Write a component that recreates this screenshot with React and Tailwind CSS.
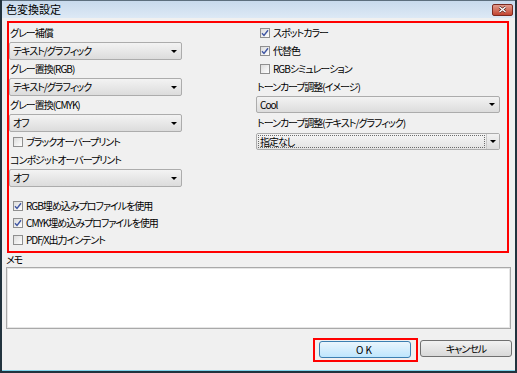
import React from "react";

// 色変換設定 dialog (Windows 7 style)

function Arrow() {
  return (
    <span className="block h-0 w-0 border-x-[3px] border-t-[3px] border-x-transparent border-t-black" />
  );
}

function Select({ value, focus }) {
  if (focus) {
    return (
      <div className="flex h-[17px] w-full rounded-[2px] border border-[#acacac] bg-linear-to-b from-[#f5f5f5] to-[#e3e3e3]">
        <div className="m-[1px] flex flex-1 items-center border border-dotted border-[#6b6b6b] pl-[1px] leading-none">
          {value}
        </div>
        <div className="flex w-[13px] items-center justify-center border-l border-[#c9c9c9] bg-linear-to-b from-[#f2f2f2] to-[#dcdcdc]">
          <Arrow />
        </div>
      </div>
    );
  }
  return (
    <div className="flex h-[18px] w-full items-center justify-between rounded-[2px] border border-[#acacac] bg-linear-to-b from-[#f3f3f3] to-[#dcdcdc] pl-[3px] pr-[4px] leading-none">
      <span>{value}</span>
      <Arrow />
    </div>
  );
}

function Check({ checked, label, h }) {
  return (
    <div className={`flex items-center ${h}`}>
      <span className="ml-[4px] mr-[3px] flex h-[10px] w-[10px] items-center justify-center border border-[#8f8f8f] bg-linear-to-br from-[#dcdcdc] to-white">
        {checked && (
          <svg width="8" height="8" viewBox="0 0 8 8">
            <path d="M1 4.2 L3 6.4 L7 1.2" fill="none" stroke="#3f56a3" strokeWidth="1.4" />
          </svg>
        )}
      </span>
      <span className="leading-none">{label}</span>
    </div>
  );
}

function Label({ children, h }) {
  return <div className={`flex items-center pl-[1px] leading-none ${h}`}>{children}</div>;
}

export default function App() {
  return (
    <div className="flex h-[373px] w-[517px] flex-col border-x-2 border-b-2 border-[#22333e] bg-[#f0f0f0] font-['Noto_Sans_CJK_JP',sans-serif] text-[10px] text-black [font-feature-settings:'palt'] tracking-[-1px]">
      {/* title bar */}
      <div className="flex h-[18px] shrink-0 items-center justify-between border-t border-[#5d6f7e] bg-linear-to-b from-[#c8daed] to-[#dde9f5] pl-[4px] pr-[2px]">
        <span className="text-[11px] leading-none tracking-normal">色変換設定</span>
        <div className="flex h-[12px] w-[21px] items-center justify-center rounded-[2px] border border-[#7b2a20] bg-linear-to-b from-[#e09a8c] to-[#c2432f]">
          <svg width="9" height="7" viewBox="0 0 9 7">
            <path d="M1.5 1 L7.5 6 M7.5 1 L1.5 6" stroke="#4a1a14" strokeWidth="2.6" />
            <path d="M1.5 1 L7.5 6 M7.5 1 L1.5 6" stroke="#ffffff" strokeWidth="1.5" />
          </svg>
        </div>
      </div>

      {/* body */}
      <div className="flex flex-1 flex-col border-b border-[#7fd3ea]">
        <div className="ml-[5px] mt-[3px] flex h-[232px] w-[502px] border-2 border-[#ff0000]">
          {/* left column */}
          <div className="flex w-[173px] flex-col">
            <Label h="h-[19px]">グレー補償</Label>
            <Select value="テキスト/グラフィック" />
            <Label h="h-[18px]">グレー置換(RGB)</Label>
            <Select value="テキスト/グラフィック" />
            <Label h="h-[18px]">グレー置換(CMYK)</Label>
            <Select value="オフ" />
            <Check h="h-[19px]" label="ブラックオーバープリント" />
            <Label h="h-[18px]">コンポジットオーバープリント</Label>
            <Select value="オフ" />
            <div className="mt-[10px]">
              <Check h="h-[17px]" checked label="RGB埋め込みプロファイルを使用" />
              <Check h="h-[17px]" checked label="CMYK埋め込みプロファイルを使用" />
              <Check h="h-[17px]" label="PDF/X出力インテント" />
            </div>
          </div>

          {/* right column */}
          <div className="ml-[74px] flex w-[244px] flex-col">
            <Check h="h-[19px]" checked label="スポットカラー" />
            <Check h="h-[18px]" checked label="代替色" />
            <Check h="h-[18px]" label="RGBシミュレーション" />
            <Label h="h-[18px]">トーンカーブ調整(イメージ)</Label>
            <div className="flex h-[17px] items-center justify-between rounded-[2px] border border-[#acacac] bg-linear-to-b from-[#f3f3f3] to-[#dcdcdc] pl-[3px] pr-[4px] leading-none">
              <span>Cool</span>
              <Arrow />
            </div>
            <Label h="h-[20px]">トーンカーブ調整(テキスト/グラフィック)</Label>
            <Select value="指定なし" focus />
          </div>
        </div>

        <div className="ml-[4px] flex h-[14px] items-center leading-none">メモ</div>
        <div className="ml-[4px] h-[62px] w-[505px] border border-[#a9a9a9] bg-white shadow-[inset_0_0_0_1px_#e6e6e6]" />

        <div className="mt-[9px] flex justify-end pr-[3px]">
          <div className="h-[24px] w-[105px] border-2 border-[#ff0000] pl-[4px] pt-[1px]">
            <button className="flex h-[17px] w-[92px] items-center justify-center rounded-[3px] border border-[#3c7fb1] bg-linear-to-b from-[#eaf6fd] to-[#bee6fd] leading-none tracking-[2px]">
              OK
            </button>
          </div>
          <button className="ml-[2px] mt-[2px] flex h-[17px] w-[92px] items-center justify-center rounded-[3px] border border-[#707070] bg-linear-to-b from-[#f2f2f2] to-[#d9d9d9] leading-none">
            キャンセル
          </button>
        </div>
      </div>
    </div>
  );
}
